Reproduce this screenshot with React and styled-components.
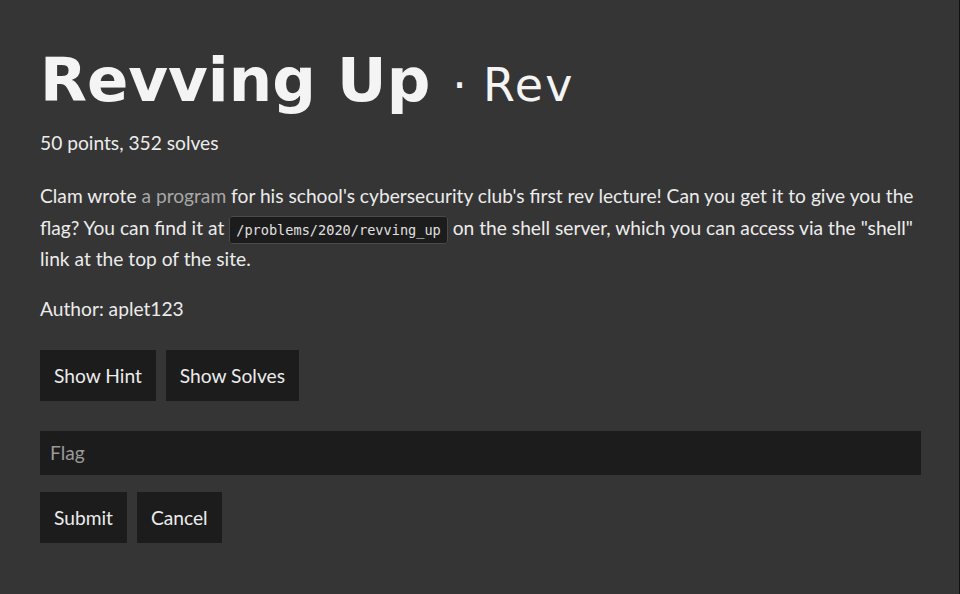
import styled, { createGlobalStyle } from "styled-components";

const GlobalStyle = createGlobalStyle`
  html, body {
    margin: 0;
    padding: 0;
    background-color: #353535;
  }
  body {
    font-family: Lato, "Noto Sans", sans-serif;
    color: #ececec;
  }
`;

const Page = styled.div`
  padding: 40px 38px 40px 40px;
  min-height: 594px;
  box-sizing: border-box;
  border-right: 1px solid #111;
`;

const Title = styled.h1`
  display: flex;
  align-items: baseline;
  margin: 0 0 4px;
  font-family: "DejaVu Sans", sans-serif;
  font-weight: 700;
  font-size: 61px;
  line-height: 80px;
  color: #f4f4f4;
`;

const Category = styled.span`
  font-weight: 400;
  font-size: 46px;
  margin-left: 22px;
  letter-spacing: 2px;
`;

const Dot = styled.span`
  margin-right: 14px;
`;

const Meta = styled.p`
  margin: 0 0 ${(p) => p.$bottom || 18}px;
  font-size: 19.2px;
  line-height: 28px;
`;

const Description = styled.p`
  margin: 0 0 20px;
  font-size: 19.2px;
  line-height: 31.5px;
`;

const Link = styled.a`
  color: #a8a8a8;
  text-decoration: none;
`;

const Code = styled.code`
  font-family: "DejaVu Sans Mono", monospace;
  font-size: 13.6px;
  line-height: 1;
  color: #e0e0e0;
  background-color: #1c1c1c;
  border: 1px solid #4a4a4a;
  border-radius: 3px;
  padding: 5px 6px;
`;

const Row = styled.div`
  display: flex;
  gap: 10px;
  margin-top: ${(p) => p.$top || 0}px;
`;

const Button = styled.button`
  font-family: Lato, "Noto Sans", sans-serif;
  font-size: 19.2px;
  color: #ececec;
  background-color: #1c1c1c;
  border: none;
  height: 51px;
  padding: 0 14px;
  cursor: pointer;
`;

const FlagInput = styled.input`
  display: block;
  width: 100%;
  box-sizing: border-box;
  height: 44px;
  margin-top: 30px;
  padding: 0 10px;
  font-family: Lato, "Noto Sans", sans-serif;
  font-size: 19.2px;
  color: #ececec;
  background-color: #1c1c1c;
  border: none;
  outline: none;
  &::placeholder {
    color: #9a9a9a;
  }
`;

export default function App() {
  return (
    <>
      <GlobalStyle />
      <Page>
        <Title>
          Revving Up
          <Category>
            <Dot>·</Dot>Rev
          </Category>
        </Title>
        <Meta $bottom={23}>50 points, 352 solves</Meta>
        <Description>
          Clam wrote <Link href="#">a program</Link> for his school's
          cybersecurity club's first rev lecture! Can you get it to give you the
          flag? You can find it at <Code>/problems/2020/revving_up</Code> on the
          shell server, which you can access via the "shell" link at the top of
          the site.
        </Description>
        <Meta>Author: aplet123</Meta>
        <Row $top={27}>
          <Button>Show Hint</Button>
          <Button>Show Solves</Button>
        </Row>
        <FlagInput placeholder="Flag" />
        <Row $top={17}>
          <Button>Submit</Button>
          <Button>Cancel</Button>
        </Row>
      </Page>
    </>
  );
}
